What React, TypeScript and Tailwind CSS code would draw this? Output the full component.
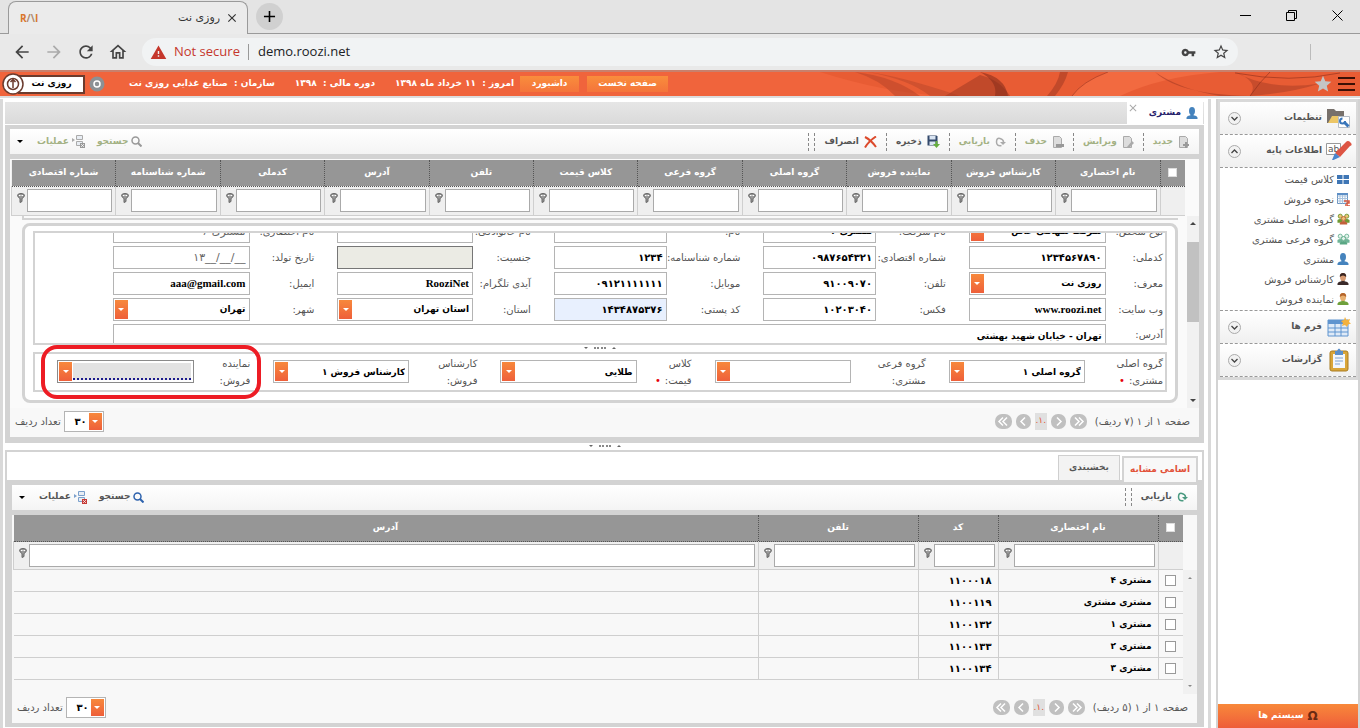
import React, { useId } from "react";
import {
  MdAdd,
  MdArrowBack,
  MdArrowForward,
  MdClose,
  MdOutlineHome,
  MdRefresh,
  MdStar,
  MdStarBorder,
  MdVpnKey,
  MdWarning,
} from "react-icons/md";

interface FieldData {
  label: string;
  value?: string;
  kind?: "text" | "number" | "select" | "disabled" | "date" | "latin" | "filled";
  required?: boolean;
}

const topColumns = [
  "نام اختصاری",
  "کارشناس فروش",
  "نماینده فروش",
  "گروه اصلی",
  "گروه فرعی",
  "کلاس قیمت",
  "تلفن",
  "آدرس",
  "کدملی",
  "شماره شناسنامه",
  "شماره اقتصادی",
];

const formRows: FieldData[][] = [
  [
    { label: "نوع شخص:", value: "شرکت سهامی خاص", kind: "select", required: true },
    { label: "نام شرکت:", value: "مشتری ۶" },
    { label: "نام:" },
    { label: "نام خانوادگی:" },
    { label: "نام اختصاری:", value: "مشتری ۶", kind: "date", required: true },
  ],
  [
    { label: "کدملی:", value: "۱۲۳۴۵۶۷۸۹۰", kind: "number" },
    { label: "شماره اقتصادی:", value: "۰۹۸۷۶۵۴۳۲۱", kind: "number" },
    { label: "شماره شناسنامه:", value: "۱۲۳۴", kind: "number" },
    { label: "جنسیت:", kind: "disabled" },
    { label: "تاریخ تولد:", value: "۱۳__/__/__", kind: "date" },
  ],
  [
    { label: "معرف:", value: "روزی نت", kind: "select" },
    { label: "تلفن:", value: "۹۱۰۰۹۰۷۰", kind: "number" },
    { label: "موبایل:", value: "۰۹۱۲۱۱۱۱۱۱۱", kind: "number" },
    { label: "آیدی تلگرام:", value: "RooziNet", kind: "latin" },
    { label: "ایمیل:", value: "aaa@gmail.com", kind: "latin" },
  ],
  [
    { label: "وب سایت:", value: "www.roozi.net", kind: "latin" },
    { label: "فکس:", value: "۱۰۲۰۳۰۴۰", kind: "number" },
    { label: "کد پستی:", value: "۱۴۳۴۸۷۵۳۷۶", kind: "filled" },
    { label: "استان:", value: "استان تهران", kind: "select" },
    { label: "شهر:", value: "تهران", kind: "select" },
  ],
];

const groupFields: { label: string[]; value: string; required?: boolean; focused?: boolean }[] = [
  { label: ["گروه اصلی", "مشتری:"], value: "گروه اصلی ۱", required: true },
  { label: ["گروه فرعی", "مشتری:"], value: "" },
  { label: ["کلاس", "قیمت:"], value: "طلایی", required: true },
  { label: ["کارشناس", "فروش:"], value: "کارشناس فروش ۱" },
  { label: ["نماینده", "فروش:"], value: "", focused: true },
];

const similarNames = [
  { name: "مشتری ۴", code: "۱۱۰۰۰۱۸" },
  { name: "مشتری مشتری", code: "۱۱۰۰۱۱۹" },
  { name: "مشتری ۱", code: "۱۱۰۰۱۳۲" },
  { name: "مشتری ۲", code: "۱۱۰۰۱۳۳" },
  { name: "مشتری ۳", code: "۱۱۰۰۱۳۴" },
];

/* ---------- icons ---------- */

function UserIcon({ body = "#4583bd", head = "#4583bd", hair = "none" }: { body?: string; head?: string; hair?: string }) {
  return (
    <svg width="12" height="12" viewBox="0 0 12 12" className="shrink-0">
      <path d="M0.5 12V10.5Q1 8.8 4.5 8.2V7h3v1.2Q11 8.8 11.5 10.5V12z" fill={body} />
      <ellipse cx="6" cy="4" rx="3" ry="4" fill={head} />
      <path d="M2.8 4Q2.500 0 6 0T9.200 4Q7.500 2.500 6 2.500T2.800 4z" fill={hair} />
    </svg>
  );
}

function GroupIcon({ front, back, skin }: { front: string; back: string; skin: string }) {
  return (
    <svg width="13" height="12" viewBox="0 0 14 12" className="shrink-0">
      <circle cx="3.500" cy="3" r="2.200" fill={skin} stroke={back} />
      <circle cx="10.500" cy="3" r="2.200" fill={skin} stroke={back} />
      <path d="M0.500 10V7Q3.500 5 6 7V10zM8 10V7Q10.500 5 13.500 7V10z" fill={back} />
      <circle cx="7" cy="5.500" r="2.200" fill={skin} stroke={front} />
      <path d="M3 12V10Q7 6.500 11 10V12z" fill={front} />
    </svg>
  );
}

function PriceIcon() {
  return (
    <svg width="12" height="9" viewBox="0 0 12 9" className="shrink-0" fill="#3f76b5">
      <path d="M0 0h5.500v4H0zM6.500 0H12v4H6.500zM0 5h5.500v4H0zM6.500 5H12v4H6.500z" />
    </svg>
  );
}

function SaleIcon() {
  return (
    <svg width="13" height="13" viewBox="0 0 13 13" className="shrink-0">
      <path d="M0.500 0.500h10v10h-10z" fill="#fff" stroke="#6a93bf" />
      <path d="M0.500 3h10M0.500 5.500h10M0.500 8h10M3 1v9.500M5.500 1v9.500M8 1v9.500" stroke="#a8c3df" fill="none" />
      <path d="M0 0h11v2H0z" fill="#5d8fc6" />
      <path d="M7 8h5v2h-2v3h3M8 12h1" stroke="#d9553b" strokeWidth="1.500" fill="none" />
    </svg>
  );
}

function FolderIcon() {
  return (
    <svg width="24" height="21" viewBox="0 0 24 21" className="shrink-0">
      <path d="M0 1h7l2 2h8v12H0z" fill="#77706b" />
      <path d="M1 15L5 8h13v7z" fill="#ecc666" />
      <path d="M11.500 8.500h11v11h-11z" fill="#fff" stroke="#b4bcc6" />
      <path d="M17 14l4.500 4.500" stroke="#3976ba" strokeWidth="3" />
      <path d="M15.500 10.500a2.500 2.500 0 1 0 2.500 2.500" fill="none" stroke="#3976ba" strokeWidth="2" />
    </svg>
  );
}

function PencilIcon() {
  return (
    <svg width="26" height="22" viewBox="0 0 26 22" className="shrink-0">
      <path d="M0.500 3.500h14v11h-14z" fill="#fff" stroke="#999" />
      <text x="2" y="12" fontSize="9" fontWeight="400" fill="#555" fontFamily="DejaVu Sans" direction="ltr">ab</text>
      <path d="M9 13L20 2Q22 0 24.500 2.500T24 6L14 17z" fill="#dd5544" />
      <path d="M9 13l5 4L7.500 20H6z" fill="#4a86cd" />
    </svg>
  );
}

function FormsIcon() {
  return (
    <svg width="24" height="20" viewBox="0 0 24 20" className="shrink-0">
      <path d="M1 3h20v16H1z" fill="#dfeaf7" stroke="#5f94cf" />
      <path d="M1 3h20v4H1z" fill="#5f94cf" />
      <path d="M1 11h20M1 15h20M8 3v16M14 3v16" stroke="#5f94cf" />
      <path d="M18 0l1.500 3L23 2l-1 3 2 1.500-3 1L20 10l-2-2-3 1 1-3-2-2 3-1z" fill="#f3b13d" />
    </svg>
  );
}

function ReportIcon() {
  return (
    <svg width="20" height="24" viewBox="0 0 20 24" className="shrink-0">
      <rect x="1" y="3" width="18" height="20" rx="2" fill="#d9a63a" stroke="#a97d22" />
      <path d="M4 6h12v14H4z" fill="#f3f7fc" />
      <path d="M6 10h8M6 13h8M6 16h5" stroke="#7fa3cf" />
      <path d="M6 3h2q2-5 4 0h2v4H6z" fill="#5b8fcb" />
    </svg>
  );
}

function DocIcon({ kind }: { kind: "new" | "edit" | "remove" }) {
  return (
    <svg width="12" height="12" viewBox="0 0 12 12" className="shrink-0">
      <path d="M1.500 0.500h6l2 2v9h-8z" fill="#ddd" stroke="#aaa" />
      {kind === "new" && <path d="M8 6v6M5 9h6" stroke="#999" strokeWidth="2" />}
      {kind === "edit" && <path d="M5 11l5-6 2 2-5 5z" fill="#aaa" />}
      {kind === "remove" && <path d="M4 9.500h8" stroke="#999" strokeWidth="3" />}
    </svg>
  );
}

function RefreshIcon({ color }: { color: string }) {
  return (
    <svg width="11" height="10" viewBox="0 0 11 10" className="shrink-0">
      <path d="M6.500 8.500Q1.500 9.500 1.500 5T5 1.500T8.500 5" fill="none" stroke={color} strokeWidth="1.500" />
      <path d="M5 5H11L8 8z" fill={color} />
    </svg>
  );
}

function SaveIcon() {
  return (
    <svg width="13" height="13" viewBox="0 0 13 13" className="shrink-0">
      <path d="M0.500 0.500h9l1 1v9h-10z" fill="#33496b" />
      <path d="M2.500 1h6v3.500h-6zM2.500 6.500h6v3.500h-6z" fill="#d9e4f2" />
      <path d="M8.500 6h2v3H13l-3.500 4L6 9h2.500z" fill="#67ae3e" />
    </svg>
  );
}

function CancelIcon() {
  return (
    <svg width="13" height="12" viewBox="0 0 13 12" className="shrink-0">
      <path d="M1 1Q7 4 12 11M12 0.500Q5 5 1 11.500" fill="none" stroke="#dc4a2c" strokeWidth="2" />
    </svg>
  );
}

function SearchIcon({ color }: { color: string }) {
  return (
    <svg width="11" height="11" viewBox="0 0 11 11" className="shrink-0">
      <circle cx="4.500" cy="4.500" r="3.500" fill="none" stroke={color} strokeWidth="1.500" />
      <path d="M7 7l3.500 3.500" stroke={color} strokeWidth="2" />
    </svg>
  );
}

function OperationsIcon({ color, accent }: { color: string; accent: string }) {
  return (
    <svg width="13" height="13" viewBox="0 0 13 13" className="shrink-0">
      <path d="M4.500 0.500h6v4h-6zM4.500 6.500h6v4h-6z" fill="#e8edf3" stroke={color} />
      <path d="M0 3l3 2-3 2z" fill={color} />
      <path d="M8 8h5v5H8z" fill={accent} />
      <path d="M9 9l3 3M12 9l-3 3" stroke="#fff" strokeWidth="0.700" />
    </svg>
  );
}

function FilterIcon() {
  return (
    <svg width="8" height="10" viewBox="0 0 8 10" className="shrink-0">
      <path d="M0.500 2.500Q0.500 0.500 4 0.500T7.500 2.500Q7 4.500 5 5.500V8.500L3 9.500V5.500Q1 4.500 0.500 2.500z" fill="#999" stroke="#666" />
      <path d="M2 2.500h1.500M4.500 2.500H6" stroke="#fff" />
    </svg>
  );
}

function Chevrons({ double, left }: { double?: boolean; left?: boolean }) {
  return (
    <svg width={double ? 17 : 15} height="15" viewBox={double ? "0 0 17 15" : "0 0 15 15"}>
      <rect width={double ? 17 : 15} height="15" rx="7" fill="#c0c0c0" />
      <g fill="none" stroke="#fff" strokeWidth="1.500" transform={left ? (double ? "matrix(-1 0 0 1 17 0)" : "matrix(-1 0 0 1 15 0)") : undefined}>
        {double ? <path d="M5 3.500l4 4-4 4M9 3.500l4 4-4 4" /> : <path d="M6 3.500l4 4-4 4" />}
      </g>
    </svg>
  );
}

/* ---------- small parts ---------- */

function OrangeArrow() {
  return (
    <span className="flex w-[13px] shrink-0 items-center justify-center self-stretch bg-linear-to-b from-[#f7883c] to-[#ee5f3a]">
      <span className="border-x-[3px] border-t-[3px] border-x-transparent border-t-white" />
    </span>
  );
}

function Combo({ id, value, focused }: { id: string; value: string; focused?: boolean }) {
  return (
    <div className={`flex h-[23px] min-w-0 border bg-white p-px ${focused ? "border-[#8a8a8a]" : "border-[#b4b4b4]"}`}>
      <select
        id={id}
        className={`min-w-0 flex-1 appearance-none px-[2px] text-[9px] font-bold text-black outline-none ${
          focused ? "m-px border-b-2 border-dotted border-[#1a1a8c] bg-[#e2e2e2]" : "bg-white pt-[2px]"
        }`}
      >
        <option>{value}</option>
      </select>
      <OrangeArrow />
    </div>
  );
}

function Field({ field, first }: { field: FieldData; first: boolean }) {
  const id = useId();
  const kind = field.kind ?? "text";
  let look = "bg-white text-black text-[9px] font-bold border-[#b4b4b4]";
  if (kind === "number") look = "bg-white text-black text-[10px] font-bold border-[#b4b4b4]";
  if (kind === "disabled") look = "bg-[#ebebe4] text-black text-[10px] border-[#767676]";
  if (kind === "date") look = "bg-white text-[#666] text-[11px] border-[#b4b4b4]";
  if (kind === "latin") look = "bg-white text-black text-[11px] font-bold border-[#b4b4b4] font-['Liberation_Serif',serif]";
  if (kind === "filled") look = "bg-[#e8f0fe] text-black text-[10px] font-bold border-[#b4b4b4]";
  return (
    <>
      <label htmlFor={id} className={`whitespace-nowrap text-[10px] leading-[23px] text-[#555] ${first ? "" : "pr-[23px]"}`}>
        {field.label}
        {field.required && <span className="mr-1 text-red-600">•</span>}
      </label>
      {kind === "select" ? (
        <Combo id={id} value={field.value ?? ""} />
      ) : (
        <input
          id={id}
          type="text"
          dir={kind === "date" ? "ltr" : undefined}
          disabled={kind === "disabled"}
          defaultValue={field.value}
          className={`h-[23px] w-full min-w-0 border px-[3px] text-right leading-[21px] outline-none ${look}`}
        />
      )}
    </>
  );
}

function Sep() {
  return <span className="h-[18px] border-l border-dashed border-[#888]" />;
}

function ToolButton({ icon, text, disabled, tight }: { icon: React.ReactNode; text: string; disabled?: boolean; tight?: boolean }) {
  return (
    <button
      type="button"
      className={`flex items-center text-[9px] font-bold whitespace-nowrap ${tight ? "gap-[3px] px-[6px]" : "gap-[5px] px-[9px]"} ${
        disabled ? "text-[#a3b183]" : "text-[#555]"
      }`}
    >
      {icon}
      {text}
    </button>
  );
}

function FilterCell({ label }: { label: string }) {
  return (
    <td className="border-l border-[#cfcfcf] p-0">
      <div className="flex items-center gap-[2px] pr-[3px] pl-[5px]">
        <input aria-label={label} className="h-[23px] w-full min-w-0 flex-1 border border-[#aaa] bg-white px-1 text-[10px] outline-none" />
        <button type="button" aria-label={`فیلتر ${label}`} className="self-start pt-1">
          <FilterIcon />
        </button>
      </div>
    </td>
  );
}

function Pager({ text }: { text: string }) {
  const id = useId();
  return (
    <div className="flex h-[29px] items-center justify-between bg-[#f8f8f8] pr-[9px] pb-[2px] pl-[5px] text-[10px] text-[#555]">
      <div className="flex items-center gap-1">
        <span className="ml-1 whitespace-nowrap">{text}</span>
        <button type="button" aria-label="صفحه اول"><Chevrons double /></button>
        <button type="button" aria-label="صفحه قبل"><Chevrons /></button>
        <button type="button" className="h-[17px] w-[12px] bg-[#e0e0e0] text-[9px] text-[#e05a3a]">.۱.</button>
        <button type="button" aria-label="صفحه بعد"><Chevrons left /></button>
        <button type="button" aria-label="صفحه آخر"><Chevrons double left /></button>
      </div>
      <div className="flex items-center gap-[3px]">
        <div className="flex h-[21px] w-[40px] border border-[#b4b4b4] bg-white p-px">
          <OrangeArrow />
          <select id={id} className="min-w-0 flex-1 appearance-none px-[2px] text-[10px] font-bold text-black outline-none">
            <option>۳۰</option>
          </select>
        </div>
        <label htmlFor={id} className="whitespace-nowrap">تعداد ردیف</label>
      </div>
    </div>
  );
}

function SplitHandle() {
  return (
    <div className="flex h-[7px] items-center justify-center gap-[6px]">
      <span className="border-x-2 border-b-2 border-x-transparent border-b-[#666]" />
      <span className="w-[12px] border-b-2 border-dotted border-[#888]" />
      <span className="border-x-2 border-t-2 border-x-transparent border-t-[#666]" />
    </div>
  );
}

/* ---------- page sections ---------- */

function BrowserBar() {
  return (
    <div className="bg-[#e4e4e4] font-['Open_Sans',sans-serif]">
      <div className="flex h-[34px] items-end border-b border-[#9a9a9a] pl-2">
        <div className="-mb-px flex h-[33px] w-[240px] items-center rounded-t-lg border border-b-0 border-[#9a9a9a] bg-[#ebebeb] px-[11px]">
          <span className="flex-1 text-[10px] font-bold text-[#d9762b]">R<span className="text-[#b08c70]">/\</span>I</span>
          <span dir="rtl" className="font-['DejaVu_Sans',sans-serif] text-[11px] text-[#333]">روزی نت</span>
          <button type="button" aria-label="Close tab" className="mr-[-3px] ml-[5px]"><MdClose size={14} color="#333" /></button>
        </div>
        <button type="button" aria-label="New tab" className="mb-[3px] ml-2 flex h-[27px] w-[27px] items-center justify-center rounded-full bg-[#d0d0d0]">
          <MdAdd size={19} />
        </button>
        <div className="mb-[12px] ml-auto flex items-center gap-[35px] pr-[17px]">
          <button type="button" aria-label="Minimize" className="h-px w-[11px] bg-black" />
          <button type="button" aria-label="Restore">
            <svg width="11" height="11" viewBox="0 0 11 11" fill="none" stroke="#000">
              <path d="M0.500 2.500h8v8h-8zM2.500 2.500v-2h8v8h-2" />
            </svg>
          </button>
          <button type="button" aria-label="Close">
            <svg width="11" height="11" viewBox="0 0 11 11" stroke="#000">
              <path d="M0.500 0.500l10 10M10.500 0.500l-10 10" />
            </svg>
          </button>
        </div>
      </div>
      <div className="flex h-[36px] items-center bg-[#e9e9e9] pl-3">
        <div className="flex w-[130px] items-center gap-[12px] text-[#444]">
          <button type="button" aria-label="Back"><MdArrowBack size={20} /></button>
          <button type="button" aria-label="Forward"><MdArrowForward size={20} color="#aaa" /></button>
          <button type="button" aria-label="Reload"><MdRefresh size={20} /></button>
          <button type="button" aria-label="Home"><MdOutlineHome size={20} /></button>
        </div>
        <div className="flex h-[28px] flex-1 items-center rounded-full bg-[#f1f3f4] px-2 text-[13px] text-[#202124]">
          <MdWarning size={17} color="#c5372c" />
          <span className="ml-[7px] text-[#c5372c]">Not secure</span>
          <span className="mr-[9px] ml-2 h-4 border-l border-[#999]" />
          <input aria-label="Address" defaultValue="demo.roozi.net" className="min-w-0 flex-1 outline-none" />
          <MdVpnKey size={15} color="#444" className="mr-4" />
          <MdStarBorder size={18} color="#444" />
        </div>
        <span className="mr-[49px] ml-[72px] h-4 border-l border-[#bbb]" />
      </div>
    </div>
  );
}

function AppHeader() {
  return (
    <header className="relative border-t-2 border-b-2 border-t-[#c9806c] border-b-[#dcdcdc] bg-[#f0643c]">
      <svg className="absolute top-0 right-0 h-full w-[540px]" viewBox="0 0 540 25" preserveAspectRatio="none">
        <path d="M0 0Q90 30 170 25H540V0z" fill="#e85c34" />
        <path d="M35 0Q75 5 100 25H75Q60 8 35 0z" fill="#b8452a" opacity=".55" />
        <path d="M48 0Q80 4 140 25H110Q90 8 48 0z" fill="#b8452a" opacity=".5" />
        <path d="M125 25L160 3Q180 8 190 25z" fill="#a63c24" opacity=".6" />
        <path d="M160 0Q185 5 188 25H175Q178 10 160 0z" fill="#8a2e1c" opacity=".6" />
        <path d="M240 0h8Q245 12 235 25h-8Q238 12 240 0z" fill="#a63c24" opacity=".6" />
        <path d="M288 0Q262 10 252 25H300Q340 5 400 0z" fill="#f26a40" />
        <path d="M288 0Q262 10 252 25" fill="none" stroke="#a63c24" opacity=".7" />
        <path d="M335 0Q360 25 440 25H400Q360 18 335 0z" fill="#a63c24" opacity=".6" />
        <path d="M415 0Q450 20 500 12Q470 22 430 25Q440 10 415 0z" fill="#a63c24" opacity=".5" />
        <path d="M415 1Q470 12 520 1M430 25Q440 10 450 0" fill="none" stroke="#8a2e1c" opacity=".6" />
      </svg>
      <div className="relative flex h-[24px] items-center pr-[5px] pl-[2px] text-[9px] font-bold text-white">
        <svg width="22" height="22" viewBox="0 0 22 22" className="relative z-10 -mr-[6px]">
          <circle cx="11" cy="11" r="10" fill="#fff" stroke="#6b3b2e" strokeWidth="1.500" />
          <circle cx="11" cy="11" r="5.500" fill="none" stroke="#6b3b2e" strokeWidth="1.500" />
          <path d="M11 15V7M8.500 9L11 6.500L13.500 9" fill="none" stroke="#6b3b2e" strokeWidth="1.500" />
        </svg>
        <span dir="rtl" className="flex h-[19px] w-[67px] items-center justify-center border-2 border-[#6b3b2e] bg-white text-black">روزی نت</span>
        <svg width="16" height="16" viewBox="0 0 16 16" className="ml-1">
          <circle cx="8" cy="8" r="5" fill="none" stroke="#8c9195" strokeWidth="5" />
          <circle cx="8" cy="8" r="3" fill="#8c9195" stroke="#fff" strokeWidth="1.500" />
        </svg>
        <div dir="rtl" className="mr-[6px] ml-6 flex gap-5 whitespace-nowrap">
          <span>امروز :&nbsp; ۱۱ خرداد ماه ۱۳۹۸</span>
          <span>دوره مالی :&nbsp; ۱۳۹۸</span>
          <span>سازمان :&nbsp; صنایع غذایی روزی نت</span>
        </div>
        <a href="#dashboard" dir="rtl" className="flex h-4 w-[59px] items-center justify-center bg-linear-to-b from-[#f98d3c] to-[#f4743b]">داشبورد</a>
        <a href="#home" dir="rtl" className="ml-2 flex h-4 w-[81px] items-center justify-center bg-linear-to-b from-[#f98d3c] to-[#f4743b]">صفحه نخست</a>
        <button type="button" aria-label="علاقه مندی" className="ml-auto"><MdStar size={20} color="#c4c4c4" stroke="#fff" /></button>
        <button type="button" aria-label="منو" className="ml-[5px] flex w-[17px] flex-col gap-1">
          <span className="h-[2px] w-full bg-[#3a0f05]" />
          <span className="h-[2px] w-full bg-[#3a0f05]" />
          <span className="h-[2px] w-full bg-[#3a0f05]" />
        </button>
      </div>
    </header>
  );
}

function SideGroup({ icon, text, open }: { icon: React.ReactNode; text: string; open?: boolean }) {
  return (
    <button type="button" className="flex h-[33px] w-full items-center border-b border-dashed border-[#999] bg-linear-to-b from-white to-[#f0f0f0] pr-1 pl-2 text-[9px] font-bold text-[#555]">
      <span className="flex w-[26px] justify-center">{icon}</span>
      <span className="mr-1 flex-1 text-right">{text}</span>
      <svg width="13" height="13" viewBox="0 0 13 13" fill="none">
        <circle cx="6.500" cy="6.500" r="6" fill="#f2f2f2" stroke="#aaa" />
        <path d={open ? "M3.500 8l3-3 3 3" : "M3.500 5l3 3 3-3"} stroke="#444" strokeWidth="1.300" />
      </svg>
    </button>
  );
}

function Sidebar() {
  const items = [
    { text: "کلاس قیمت", icon: <PriceIcon /> },
    { text: "نحوه فروش", icon: <SaleIcon /> },
    { text: "گروه اصلی مشتری", icon: <GroupIcon front="#c2603a" back="#6f9a34" skin="#efc277" /> },
    { text: "گروه فرعی مشتری", icon: <GroupIcon front="#5aa784" back="#6fb497" skin="#e4f3ec" /> },
    { text: "مشتری", icon: <UserIcon /> },
    { text: "کارشناس فروش", icon: <UserIcon body="#3a2a2a" head="#d99b72" hair="#3a2420" /> },
    { text: "نماینده فروش", icon: <UserIcon body="#6fa03c" head="#e8b070" hair="#b5652b" /> },
  ];
  return (
    <aside className="flex w-[144px] shrink-0 flex-col border-r-2 border-l-2 border-[#d3d3d3]">
      <nav className="border-x-2 border-y-[3px] border-[#d9d9d9]">
        <SideGroup icon={<FolderIcon />} text="تنظیمات" />
        <SideGroup icon={<PencilIcon />} text="اطلاعات پایه" open />
        <ul className="border-b border-dashed border-[#999] pt-px pb-px">
          {items.map((item) => (
            <li key={item.text}>
              <a href="#item" className="flex h-5 items-center gap-[2px] pr-[6px] text-[10px] text-[#555]">
                <span className="flex w-[14px] justify-center">{item.icon}</span>
                {item.text}
              </a>
            </li>
          ))}
        </ul>
        <SideGroup icon={<FormsIcon />} text="فرم ها" />
        <SideGroup icon={<ReportIcon />} text="گزارشات" />
      </nav>
      <button type="button" className="mt-auto flex h-6 items-center justify-center gap-1 bg-linear-to-b from-[#f8883a] to-[#ee5c3a] text-[9px] font-bold text-white">
        <span className="text-[12px] text-[#6b2a12]">Ω</span>
        سیستم ها
      </button>
    </aside>
  );
}

function CustomerForm() {
  const addressId = useId();
  const baseId = useId();
  return (
    <div className="flex bg-[#fafafa]">
      <div className="flex w-3 flex-col items-center justify-between bg-[#f1f1f1] py-[6px]">
        <span className="border-x-[3px] border-b-[3px] border-x-transparent border-b-[#444]" />
        <span className="mt-[17px] mb-auto h-20 w-full bg-[#c1c1c1]" />
        <span className="border-x-[3px] border-t-[3px] border-x-transparent border-t-[#444]" />
      </div>
      <div className="flex-1 pr-[9px] pb-[5px] pl-3">
        <div className="mb-[3px] h-[4px] border-b-2 border-l-2 border-[#d3d3d3]" />
        <div className="rounded-lg border-[3px] border-[#d3d3d3] bg-white px-2 pt-[5px] pb-2">
          <div className="h-[114px] overflow-hidden border-2 border-[#d3d3d3]">
            <div className="-mt-[13px] grid grid-cols-[55fr_137fr_93fr_113fr_97fr_113fr_81fr_136fr_87fr_137fr_78fr] gap-y-[3px] pr-[2px]">
              {formRows.map((row, r) => (
                <React.Fragment key={r}>
                  {row.map((field, i) => (
                    <Field key={field.label} field={field} first={i === 0} />
                  ))}
                  <span />
                </React.Fragment>
              ))}
              <label htmlFor={addressId} className="text-[10px] leading-[22px] text-[#555]">آدرس:</label>
              <input id={addressId} defaultValue="تهران - خیابان شهید بهشتی" className="col-span-9 h-[24px] border border-[#b4b4b4] px-[3px] text-[9px] font-bold text-black outline-none" />
            </div>
          </div>
          <SplitHandle />
          <div className="relative border-2 border-[#d3d3d3]">
            <div className="grid h-[36px] grid-cols-[78fr_136fr_98fr_136fr_78fr_136fr_91fr_136fr_79fr_137fr_22fr] items-center pr-[2px]">
              {groupFields.map((field, i) => (
                <React.Fragment key={field.label.join(" ")}>
                  <label htmlFor={`${baseId}${i}`} className={`whitespace-nowrap text-[10px] leading-[17px] text-[#555] ${i === 0 ? "" : "pr-[23px]"}`}>
                    {field.label[0]}
                    <br />
                    {field.label[1]}
                    {field.required && <span className="mr-1 text-red-600">•</span>}
                  </label>
                  <Combo id={`${baseId}${i}`} value={field.value} focused={field.focused} />
                </React.Fragment>
              ))}
            </div>
            {/* highlight around the sales representative field */}
            <div className="pointer-events-none absolute -top-[9px] left-[6px] h-[54px] w-[220px] rounded-2xl border-4 border-[#ed1c24]" />
          </div>
        </div>
      </div>
    </div>
  );
}

function CustomerPanel() {
  return (
    <section className="bg-[#d3d3d3]">
      <div className="flex h-[23px] border-b border-white bg-linear-to-b from-[#e6e6e6] to-[#dadada] pr-px">
        <div className="flex w-[76px] items-center gap-[5px] bg-white pr-[5px] text-[9px] font-bold text-[#26216b]">
          <UserIcon />
          مشتری
          <button type="button" aria-label="بستن" className="mr-auto self-start"><MdClose size={12} color="#aaa" /></button>
        </div>
      </div>
      <div className="px-[5px] pt-1 pb-[6px]">
        <div className="flex h-[25px] items-center justify-between bg-linear-to-b from-white to-[#f4f4f4]">
          <div className="flex items-center">
            <ToolButton icon={<DocIcon kind="new" />} text="جدید" disabled />
            <Sep />
            <ToolButton icon={<DocIcon kind="edit" />} text="ویرایش" disabled />
            <Sep />
            <ToolButton icon={<DocIcon kind="remove" />} text="حذف" disabled />
            <Sep />
            <ToolButton icon={<RefreshIcon color="#aaa" />} text="بازیابی" disabled />
            <Sep />
            <ToolButton icon={<SaveIcon />} text="ذخیره" />
            <Sep />
            <ToolButton icon={<CancelIcon />} text="انصراف" />
            <Sep />
            <span className="w-[5px]" />
            <Sep />
          </div>
          <div className="flex items-center pl-[7px]">
            <ToolButton icon={<SearchIcon color="#999" />} text="جستجو" disabled tight />
            <ToolButton icon={<OperationsIcon color="#aaa" accent="#999" />} text="عملیات" disabled tight />
            <span className="mr-2 border-x-[3px] border-t-[3px] border-x-transparent border-t-black" />
          </div>
        </div>
        <div className="mt-[5px] bg-[#fafafa] pt-px">
          <div className="pr-[14px] pl-px">
            <table className="w-full table-fixed border-collapse border-b border-[#cfcfcf] bg-[#efefef]">
              <thead>
                <tr className="h-[26px] bg-[#969696] text-[9px] text-white">
                  <th className="w-[25px] border-b border-dotted border-[#555] p-0">
                    <input type="checkbox" aria-label="انتخاب همه" className="mx-auto block h-[9px] w-[9px] appearance-none border border-[#ddd] bg-white" />
                  </th>
                  {topColumns.map((column) => (
                    <th key={column} className="border-r border-b border-dotted border-[#555] p-0 font-bold whitespace-nowrap">{column}</th>
                  ))}
                </tr>
              </thead>
              <tbody>
                <tr className="h-[29px]">
                  <td className="border-l border-[#cfcfcf]" />
                  {topColumns.map((column) => (
                    <FilterCell key={column} label={column} />
                  ))}
                </tr>
              </tbody>
            </table>
          </div>
          <CustomerForm />
          <Pager text="صفحه ۱ از ۱ (۷ ردیف)" />
        </div>
      </div>
    </section>
  );
}

function SimilarPanel() {
  return (
    <section className="flex flex-1 flex-col bg-[#d3d3d3] px-[2px] pt-[2px] pb-1">
      <div className="flex h-[28px] items-end gap-[2px] bg-white pr-1 text-[9px]">
        <button type="button" className="-mb-[2px] h-[26px] w-[76px] border-2 border-b-0 border-[#d3d3d3] bg-[#f8f8f8] font-bold text-[#e2523a]">اسامی مشابه</button>
        <button type="button" className="h-[25px] w-[62px] border border-b-0 border-[#cfcfcf] bg-[#f3f3f3] font-bold text-[#555]">بخشبندی</button>
      </div>
      <div className="flex flex-1 flex-col pt-[5px] pr-[5px] pl-[5px]">
        <div className="flex h-[25px] items-center justify-between bg-linear-to-b from-white to-[#f4f4f4]">
          <div className="flex items-center">
            <ToolButton icon={<RefreshIcon color="#4a9a80" />} text="بازیابی" />
            <Sep />
            <span className="w-[5px]" />
            <Sep />
          </div>
          <div className="flex items-center pl-[7px]">
            <ToolButton icon={<SearchIcon color="#2d62ad" />} text="جستجو" tight />
            <ToolButton icon={<OperationsIcon color="#7ba0cc" accent="#c53a35" />} text="عملیات" tight />
            <span className="mr-2 border-x-[3px] border-t-[3px] border-x-transparent border-t-black" />
          </div>
        </div>
        <div className="mt-[5px] flex flex-1 flex-col bg-[#f8f8f8]">
          <div className="flex">
            <div className="flex w-[14px] flex-col">
              <div className="h-[55px]" />
              <div className="flex flex-1 flex-col items-center justify-between bg-[#f1f1f1] py-[7px]">
                <span className="border-x-2 border-b-2 border-x-transparent border-b-[#888]" />
                <span className="border-x-2 border-t-2 border-x-transparent border-t-[#888]" />
              </div>
            </div>
            <div className="flex-1 pb-[14px] pl-px">
              <table className="w-full table-fixed border-collapse bg-[#f8f8f8] text-[9px]">
                <thead>
                  <tr className="h-[27px] bg-[#969696] text-white">
                    <th className="w-[25px] border-b border-dotted border-[#555] p-0">
                      <input type="checkbox" aria-label="انتخاب همه" className="mx-auto block h-[9px] w-[9px] appearance-none border border-[#ddd] bg-white" />
                    </th>
                    <th className="w-[160px] border-r border-b border-dotted border-[#555] p-0">نام اختصاری</th>
                    <th className="w-[80px] border-r border-b border-dotted border-[#555] p-0">کد</th>
                    <th className="w-[160px] border-r border-b border-dotted border-[#555] p-0">تلفن</th>
                    <th className="border-r border-b border-dotted border-[#555] p-0">آدرس</th>
                  </tr>
                </thead>
                <tbody>
                  <tr className="h-[28px] border-b border-[#cfcfcf] bg-[#efefef]">
                    <td className="border-l border-[#cfcfcf]" />
                    <FilterCell label="نام اختصاری" />
                    <FilterCell label="کد" />
                    <FilterCell label="تلفن" />
                    <FilterCell label="آدرس" />
                  </tr>
                  {similarNames.map((row) => (
                    <tr key={row.code} className="h-[22px] border-b border-[#cfcfcf] font-bold text-black">
                      <td className="border-l border-[#cfcfcf] p-0">
                        <input type="checkbox" aria-label={row.name} className="mx-auto block h-[11px] w-[11px] appearance-none border border-[#999] bg-white" />
                      </td>
                      <td className="border-l border-[#cfcfcf] py-0 pr-[6px]">{row.name}</td>
                      <td className="border-l border-[#cfcfcf] py-0 pr-[6px] text-[10px]">{row.code}</td>
                      <td className="border-l border-[#cfcfcf]" />
                      <td />
                    </tr>
                  ))}
                </tbody>
              </table>
            </div>
          </div>
          <Pager text="صفحه ۱ از ۱ (۵ ردیف)" />
        </div>
      </div>
    </section>
  );
}

export default function App() {
  return (
    <div className="flex min-h-screen flex-col bg-white font-['DejaVu_Sans',sans-serif]">
      <BrowserBar />
      <AppHeader />
      <div dir="rtl" className="flex flex-1 pt-px">
        <Sidebar />
        <main className="mr-[5px] flex min-w-0 flex-1 flex-col border-x-[3px] border-[#d9d9d9] pt-[3px] pr-1 pb-px pl-[2px]">
          <CustomerPanel />
          <SplitHandle />
          <SimilarPanel />
        </main>
      </div>
    </div>
  );
}
